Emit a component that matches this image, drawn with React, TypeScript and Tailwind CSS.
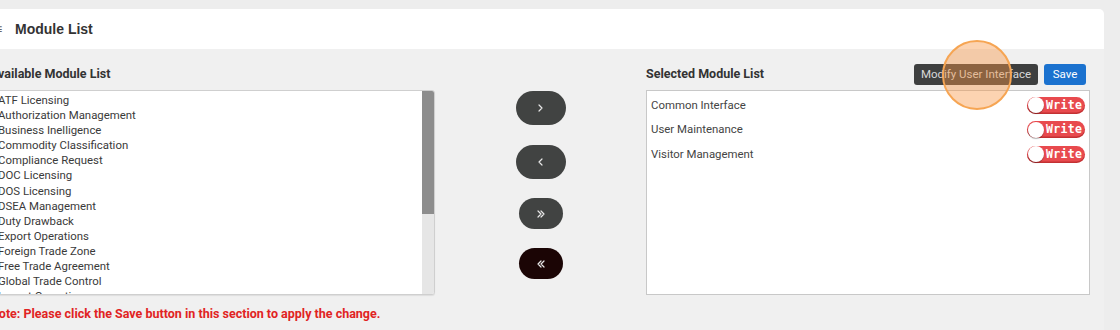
import React from "react";

const available = [
  "ATF Licensing",
  "Authorization Management",
  "Business Inelligence",
  "Commodity Classification",
  "Compliance Request",
  "DOC Licensing",
  "DOS Licensing",
  "DSEA Management",
  "Duty Drawback",
  "Export Operations",
  "Foreign Trade Zone",
  "Free Trade Agreement",
  "Global Trade Control",
  "Import Operations",
];

const selected = ["Common Interface", "User Maintenance", "Visitor Management"];

function Chevron({ dir, double }: { dir: "r" | "l"; double?: boolean }) {
  const one = dir === "r" ? "M1 1 L4 4 L1 7" : "M4 1 L1 4 L4 7";
  const two = dir === "r" ? "M4 1 L7 4 L4 7" : "M7 1 L4 4 L7 7";
  return (
    <svg width={double ? 8 : 5} height="8" viewBox={double ? "0 0 8 8" : "0 0 5 8"} fill="none">
      <path d={one} stroke="#e8e8e8" strokeWidth="1.2" strokeLinecap="round" strokeLinejoin="round" />
      {double && <path d={two} stroke="#e8e8e8" strokeWidth="1.2" strokeLinecap="round" strokeLinejoin="round" />}
    </svg>
  );
}

function Toggle() {
  return (
    <div className="flex h-[17px] w-[58px] items-center rounded-full bg-[#e84a4e] shadow-[inset_0_-1.5px_0_rgba(150,20,20,0.45)]">
      <div className="ml-[1px] h-[16px] w-[16px] rounded-full bg-white shadow-[0_1px_1px_rgba(0,0,0,0.3)]" />
      <span className="ml-[2px] text-[11.5px] font-bold leading-none tracking-[0.3px] text-white [font-family:'DejaVu_Sans_Mono',monospace]">
        Write
      </span>
    </div>
  );
}

export default function App() {
  return (
    <div className="relative h-[330px] w-[1120px] overflow-hidden bg-[#ededed] [font-family:Roboto,'Liberation_Sans',Arial,sans-serif]">
      <div className="-ml-[10px] flex h-full w-[1114px] flex-col pt-[9px]">
        <div className="flex h-[40px] shrink-0 items-center rounded-tr-[5px] bg-white pl-[4px]">
          <span className="w-[21px] text-[14px] text-[#666]">≡</span>
          <span className="text-[14px] font-bold text-[#333] [font-family:'Liberation_Sans',Arial,sans-serif]">Module List</span>
        </div>
        <div className="flex flex-1 flex-col bg-[#f0f0f0] pr-[14px] pt-[15px]">
          <div className="flex">
            {/* Left column */}
            <div className="flex w-[445px] flex-col">
              <div className="flex h-[21px] items-center text-[12.5px] font-bold text-[#333]">
                Available Module List
              </div>
              <div className="mt-[5px] flex h-[205px] overflow-hidden rounded-[3px] border border-[#cfcfcf] bg-white shadow-[0_1px_1px_rgba(0,0,0,0.08)]">
                <div className="flex-1 overflow-hidden pl-[7px] pt-[2px]">
                  {available.map((m) => (
                    <div key={m} className="h-[15.1px] whitespace-nowrap text-[11.4px] leading-[15px] text-[#3a3a3a]">
                      {m}
                    </div>
                  ))}
                </div>
                <div className="w-[12px] bg-[#e6e6e6]">
                  <div className="h-[123px] bg-[#8d8d8d]" />
                </div>
              </div>
            </div>
            {/* Middle column */}
            <div className="flex w-[211px] flex-col items-center pt-[27px]">
              <button className="flex h-[34px] w-[50px] items-center justify-center rounded-full bg-[#414342]">
                <Chevron dir="r" />
              </button>
              <button className="mt-[20px] flex h-[34px] w-[50px] items-center justify-center rounded-full bg-[#414342]">
                <Chevron dir="l" />
              </button>
              <button className="mt-[19px] flex h-[31px] w-[44px] items-center justify-center rounded-full bg-[#414342]">
                <Chevron dir="r" double />
              </button>
              <button className="mt-[19px] flex h-[31px] w-[44px] items-center justify-center rounded-full bg-[#1b0505]">
                <Chevron dir="l" double />
              </button>
            </div>
            {/* Right column */}
            <div className="flex w-[444px] flex-col">
              <div className="flex h-[21px] items-center pr-[4px]">
                <span className="flex-1 text-[12.5px] font-bold text-[#333]">Selected Module List</span>
                <button className="flex h-[21px] w-[124px] items-center justify-center rounded-[3px] bg-[#3e3f3f] text-[11.5px] text-[#d8d8d8]">
                  Modify User Interface
                </button>
                <button className="ml-[6px] flex h-[21px] w-[42px] items-center justify-center rounded-[3px] bg-[#1b72cf] text-[11.5px] text-white">
                  Save
                </button>
              </div>
              <div className="mt-[5px] h-[205px] border border-[#c8c8c8] bg-white pl-[4px] pr-[4px] pt-[2px]">
                {selected.map((m) => (
                  <div key={m} className="flex h-[24.5px] items-center justify-between">
                    <span className="text-[11.4px] text-[#444]">{m}</span>
                    <Toggle />
                  </div>
                ))}
              </div>
            </div>
          </div>
          <div className="mt-[11px] text-[12.5px] font-bold leading-[16px] text-[#e12323]">
            Note: Please click the Save button in this section to apply the change.
          </div>
        </div>
      </div>
      <div className="pointer-events-none absolute left-[942px] top-[40px] h-[70px] w-[70px] rounded-full border-[2px] border-[#f6a553] bg-[rgba(247,150,70,0.42)]" />
    </div>
  );
}
